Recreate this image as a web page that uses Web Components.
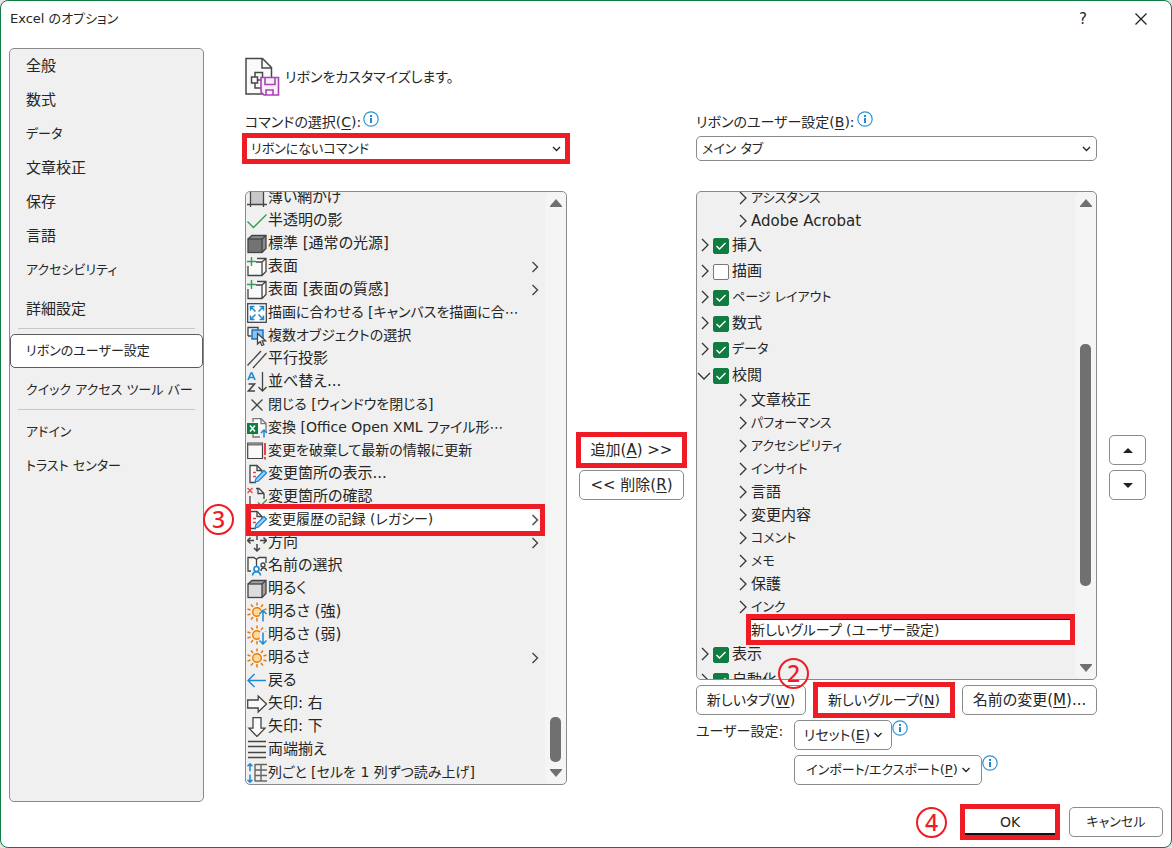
<!DOCTYPE html>
<html lang="ja">
<head>
<meta charset="utf-8">
<title>Excel のオプション</title>
<style>
html, body { margin: 0; height: 100%; background: #e4e4e4; }
body {
  font: 15px/22px "DejaVu Sans", "Noto Sans CJK JP", sans-serif;
  font-feature-settings: "palt";
  color: #262626;
  --line: #8a8a8a;
  --panel: #f0f0f0;
  --mark: #ee1c25;
  --green: #107c41;
}
</style>
</head>
<body>
<options-dialog></options-dialog>

<template id="dialog">
<style>
:host {
  display: grid; grid-template: 46px minmax(0, 1fr) 45px / minmax(0, 1fr);
  box-sizing: border-box; height: 100vh; min-height: 640px;
  border: 1px solid var(--green); border-radius: 8px; background: #fff;
  overflow: hidden;
}
.mixed { font-size: 14px; }
.kana { font-size: 13px; }
header { display: flex; align-items: flex-start; justify-content: space-between; padding: 7px 7px 0 9px; }
h1, h2 { margin: 0; font-weight: 400; font-size: 15px; }
h1 { font-size: 13px; }
.tools { display: flex; gap: 12px; }
.tools button { width: 46px; height: 22px; padding: 0; border: 0; background: none; font: inherit; color: inherit; display: grid; place-items: center; }
.body { display: grid; grid-template-columns: 195px minmax(0, 1fr); gap: 41px; padding: 1px 25px 0 8px; min-height: 0; }
nav { border: 1px solid var(--line); border-radius: 5px; background: var(--panel); }
nav hr { border: 0; border-top: 1px solid #c8c8c8; margin: 2px 8px 5px; }
nav .gap { height: 5px; }
main { display: flex; flex-direction: column; min-height: 0; padding: 9px 0 17px; box-sizing: border-box; }
.head { display: flex; align-items: center; gap: 4px; height: 40px; margin-bottom: 13px; }
.cols { flex: 1; min-height: 0; display: grid; grid-template-columns: minmax(0, 322fr) 105px minmax(0, 401fr) 37px; column-gap: 12px; }
.col { display: flex; flex-direction: column; min-height: 0; }
.side { display: flex; flex-direction: column; justify-content: center; gap: 5px; padding-top: 40px; }
.list { position: relative; flex: 1; min-height: 0; margin-top: 30px; display: flex; }
.row { display: flex; justify-content: space-between; margin: 5px 0; }
.spot { position: relative; }
.spot step-mark { position: absolute; left: -38px; top: -27px; }
.list step-mark { position: absolute; left: -42px; top: 313px; }
.custom { display: grid; grid-template-columns: 98px 1fr; row-gap: 5px; }
.custom > div { grid-column: 2; display: flex; align-items: flex-start; }
footer { display: flex; justify-content: flex-end; align-items: flex-start; gap: 12px; padding: 5px 8px 0; }
footer step-mark { margin-right: 4px; }
</style>
<header>
  <h1>Excel のオプション</h1>
  <div class="tools">
    <button aria-label="ヘルプ">?</button>
    <button aria-label="閉じる"><svg width="12" height="12" viewBox="0 0 12 12" fill="none" stroke="#222" stroke-width="1.3"><path d="M.5.5l11 11M11.5.5l-11 11"/></svg></button>
  </div>
</header>
<div class="body">
  <nav>
    <nav-item>全般</nav-item><nav-item>数式</nav-item><nav-item class="kana">データ</nav-item><nav-item>文章校正</nav-item>
    <nav-item>保存</nav-item><nav-item>言語</nav-item><nav-item class="kana">アクセシビリティ</nav-item>
    <div class="gap"></div>
    <nav-item>詳細設定</nav-item><hr>
    <nav-item current class="kana">リボンのユーザー設定</nav-item>
    <div class="gap"></div>
    <nav-item class="kana">クイック アクセス ツール バー</nav-item><hr>
    <nav-item class="kana">アドイン</nav-item><nav-item class="kana">トラスト センター</nav-item>
  </nav>
  <main>
    <div class="head">
      <svg width="36" height="40" viewBox="0 0 36 40" fill="none">
        <path d="M1 1.500h16.500l9 9v26.500H1z" fill="#fafafa" stroke="#484848" stroke-width="1.500"/>
        <path d="M17 1.500V11h9.500" stroke="#484848" stroke-width="1.500"/>
        <path d="M10 20v-4.500h7.500v5M10 26v5h6M12.500 20H6.500v6h6zM12.500 23H16" stroke="#484848" stroke-width="1.500"/>
        <path d="M16 20.500h17.500v17.500H19l-3-3z" fill="#fbeffb" stroke="#a845b2" stroke-width="1.600"/>
        <path d="M20 21v6.500h10V21M21 38v-5h7v5" stroke="#a845b2" stroke-width="1.600"/>
      </svg>
      <h2 class="mixed">リボンをカスタマイズします。</h2>
    </div>
    <div class="cols">
      <div class="col">
        <pick-field class="mixed" value="リボンにないコマンド" marked>コマンドの選択(<u>C</u>):</pick-field>
        <div class="list">
          <scroll-list before="504" thumb="45" after="0" label="コマンド">
            <command-row icon="shade">薄い網かけ</command-row>
            <command-row icon="check">半透明の影</command-row>
            <command-row icon="cubeDark">標準 [通常の光源]</command-row>
            <command-row icon="cubePlus" more>表面</command-row>
            <command-row icon="cubePlus" more>表面 [表面の質感]</command-row>
            <command-row icon="fit" class="mixed">描画に合わせる [キャンバスを描画に合⋯</command-row>
            <command-row icon="multi" class="mixed">複数オブジェクトの選択</command-row>
            <command-row icon="parallel">平行投影</command-row>
            <command-row icon="sort">並べ替え...</command-row>
            <command-row icon="close" class="mixed">閉じる [ウィンドウを閉じる]</command-row>
            <command-row icon="convert" class="mixed">変換 [Office Open XML ファイル形⋯</command-row>
            <command-row icon="revert" class="mixed">変更を破棄して最新の情報に更新</command-row>
            <command-row icon="track">変更箇所の表示...</command-row>
            <command-row icon="review">変更箇所の確認</command-row>
            <command-row icon="track" more marked class="mixed">変更履歴の記録 (レガシー)</command-row>
            <command-row icon="dirs" more>方向</command-row>
            <command-row icon="names">名前の選択</command-row>
            <command-row icon="cubeLight">明るく</command-row>
            <command-row icon="sunUp">明るさ (強)</command-row>
            <command-row icon="sunDown">明るさ (弱)</command-row>
            <command-row icon="sun" more>明るさ</command-row>
            <command-row icon="back">戻る</command-row>
            <command-row icon="right">矢印: 右</command-row>
            <command-row icon="down">矢印: 下</command-row>
            <command-row icon="justify">両端揃え</command-row>
            <command-row icon="columns" class="mixed">列ごと [セルを 1 列ずつ読み上げ]</command-row>
          </scroll-list>
          <step-mark>3</step-mark>
        </div>
      </div>
      <div class="side">
        <push-button marked>追加(<u>A</u>) &gt;&gt;</push-button>
        <push-button>&lt;&lt; 削除(<u>R</u>)</push-button>
      </div>
      <div class="col">
        <pick-field class="mixed" value="メイン タブ">リボンのユーザー設定(<u>B</u>):</pick-field>
        <div class="list">
          <scroll-list before="130" thumb="242" after="71" label="リボンのタブ">
            <tree-row class="kana">アシスタンス</tree-row>
            <tree-row>Adobe Acrobat</tree-row>
            <tree-row tab checked>挿入</tree-row>
            <tree-row tab>描画</tree-row>
            <tree-row tab checked class="kana">ページ レイアウト</tree-row>
            <tree-row tab checked>数式</tree-row>
            <tree-row tab checked class="kana">データ</tree-row>
            <tree-row tab checked open>校閲</tree-row>
            <tree-row>文章校正</tree-row>
            <tree-row class="kana">パフォーマンス</tree-row>
            <tree-row class="kana">アクセシビリティ</tree-row>
            <tree-row class="kana">インサイト</tree-row>
            <tree-row>言語</tree-row>
            <tree-row>変更内容</tree-row>
            <tree-row class="kana">コメント</tree-row>
            <tree-row class="kana">メモ</tree-row>
            <tree-row>保護</tree-row>
            <tree-row class="kana">インク</tree-row>
            <tree-row marked class="mixed">新しいグループ (ユーザー設定)</tree-row>
            <tree-row tab checked>表示</tree-row>
            <tree-row tab checked>自動化</tree-row>
          </scroll-list>
        </div>
        <div class="row">
          <push-button class="mixed" style="width:110px">新しいタブ(<u>W</u>)</push-button>
          <div class="spot"><push-button class="mixed" marked style="width:136px">新しいグループ(<u>N</u>)</push-button><step-mark>2</step-mark></div>
          <push-button style="width:135px">名前の変更(<u>M</u>)...</push-button>
        </div>
        <div class="custom">
          <span class="mixed">ユーザー設定:</span>
          <div><push-button menu class="mixed" style="width:98px">リセット(<u>E</u>)</push-button><info-icon></info-icon></div>
          <div><push-button menu class="kana" style="width:188px">インポート/エクスポート(<u>P</u>)</push-button><info-icon></info-icon></div>
        </div>
      </div>
      <div class="side">
        <push-button label="上へ"><svg width="10" height="5" viewBox="0 0 10 5"><path d="M0 5l5-5 5 5z" fill="#222"/></svg></push-button>
        <push-button label="下へ"><svg width="10" height="5" viewBox="0 0 10 5"><path d="M0 0l5 5 5-5z" fill="#222"/></svg></push-button>
      </div>
    </div>
  </main>
</div>
<footer>
  <step-mark>4</step-mark>
  <push-button marked primary class="mixed" style="width:94px">OK</push-button>
  <push-button class="kana" style="width:94px">キャンセル</push-button>
</footer>
</template>

<script>
const define = (name, markup, ready) => customElements.define(name, class extends HTMLElement {
  connectedCallback() {
    if (this.shadowRoot) return;
    const root = this.attachShadow({ mode: 'open' });
    root.innerHTML = typeof markup === 'function' ? markup(this) : markup;
    if (ready) ready(this, root);
  }
});

const ink = '#444', blue = '#1e88d2', green = '#2f9e4f', red = '#e8414b';
const cube = (fill, top) => `<path d="M1 5l4-3.500h14v13l-4 4" fill="${top}" stroke="${ink}"/><rect x="1" y="5" width="14" height="13.500" fill="${fill}" stroke="${ink}"/><path d="M15 5l4-3.500" stroke="${ink}"/>`;
const sun = `<circle cx="10" cy="10" r="4.300" fill="#fbdc96" stroke="#e8780c" stroke-width="1.400"/><path d="M10 .5v3M10 16v3.500M.5 7l3 1M.5 13l3-1M16.500 8l3-1M16.500 12l3 1M4 2.500l2 2.500M14 15l2 2.500M4 17.500L6 15M14 5l2-2.500" stroke="#e8780c" stroke-width="1.500"/>`;
const page = `<path d="M9 18.500H3V1.500h7l5 5v3" fill="#fafafa" stroke="${ink}"/><path d="M10 1.500v5h5" stroke="${ink}"/>`;
const icons = {
  shade: `<rect x="3" y="1" width="14" height="15" fill="#c8c8c8"/><path d="M3.500 0v19M16.500 0v19M0 16.500h20" stroke="${ink}"/>`,
  check: `<path d="M.5 10.500l6 6L19.500 3.500" stroke="${green}" stroke-width="1.400"/>`,
  cubeDark: cube('#737373', '#8c8c8c'),
  cubeLight: cube('#dcdcdc', '#a2a2a2'),
  cubePlus: `<path d="M10 1.500h9v13l-4 4H1V9M9 5h6v13.500M15 5l4-3.500" fill="#fafafa" stroke="${ink}"/><path d="M4.500 0v9M0 4.500h9" stroke="${green}" stroke-width="1.400"/>`,
  fit: `<rect x=".7" y=".7" width="18.600" height="18.600" fill="#fff" stroke="${ink}" stroke-width="1.300"/><path d="M3.500 7.500v-4h4M3.500 3.500l5 5M12.500 3.500h4v4M16.500 3.500l-5 5M3.500 12.500v4h4M3.500 16.500l5-5M16.500 12.500v4h-4M16.500 16.500l-5-5" stroke="${blue}" stroke-width="1.500"/>`,
  multi: `<path d="M1 10V1.500h10V4M1 10h3" fill="#fff" stroke="${ink}"/><rect x="5" y="4" width="11" height="9" fill="#8cc4ee" stroke="#0f6cbd" stroke-width="1.400"/><path d="M10.500 7.500v10.500l2.700-2.500 1.600 4 2-.8-1.700-3.900h3.400z" fill="#fff" stroke="${ink}"/>`,
  parallel: `<path d="M.5 16.500L14 2M6 19L19.500 4" stroke="${ink}" stroke-width="1.300"/>`,
  sort: `<path d="M1 8l3-7h1l3 7M2.200 5.500h4.600" stroke="${blue}" stroke-width="1.600"/><path d="M1.500 12h6l-6 7h6.500" stroke="${ink}" stroke-width="1.600"/><path d="M15.500 0v19M11.500 15l4 4 4-4" stroke="${ink}" stroke-width="1.300"/>`,
  close: `<path d="M4.500 4.500l11 11M15.500 4.500l-11 11" stroke="${ink}" stroke-width="1.300"/>`,
  convert: `<path d="M6 4V.7h8l5 4.800V14M6 16v3h7" fill="#fafafa" stroke="#777"/><path d="M14 .7v5h5" stroke="#777"/><rect y="5" width="11" height="11" fill="#107c41"/><path d="M3 7.500l5 6M8 7.500l-5 6" stroke="#fff" stroke-width="1.500"/><path d="M17 19.500V12M14 15l3-3 3 3" stroke="${blue}" stroke-width="1.500"/>`,
  revert: `<path d="M15.500 2v15.500H.7V2z" fill="#fafafa" stroke="${ink}" stroke-width="1.200"/><path d="M1 3.500h14.500" stroke="#777" stroke-width="2"/><path d="M18 2v12M18 16v2.500" stroke="${red}" stroke-width="2"/>`,
  track: page + `<path d="M6 8.500h3M6 12.500h3" stroke="${red}" stroke-width="1.600"/><path d="M8 18l1-3.500 8-8 2.500 2.500-8 8z" fill="#9fd0f3" stroke="${blue}" stroke-width="1.300"/>`,
  review: `<path d="M3 9v9.500h7M9 1.500h3l5 5V12" fill="#fafafa" stroke="${ink}"/><path d="M11 1.500v5h6" stroke="${ink}"/><path d="M.5 1l5 5M5.500 1l-5 5" stroke="${red}" stroke-width="1.300"/><path d="M11 15.500l3 3 6-6" stroke="${green}" stroke-width="1.500"/>`,
  dirs: `<path d="M.5 7.500H7M3.500 4.500l-3 3 3 3M19.500 7.500H13M16.500 4.500l3 3-3 3M10 11v7M7 15l3 3 3-3M10 3v4" stroke="${ink}" stroke-width="1.500"/>`,
  names: `<path d="M4 15H1V1.500h6l2.500 2L12 1.500h7V7M9.500 3.500V10" fill="#fafafa" stroke="${ink}"/><circle cx="9.500" cy="13" r="2.500" fill="#fff" stroke="${blue}" stroke-width="1.600"/><path d="M5.500 19.500c.5-5 7.500-5 8 0" stroke="${blue}" stroke-width="1.600"/><circle cx="16" cy="9" r="2" stroke="${ink}"/><path d="M14 15c0-4 5-4 5.500 0" stroke="${ink}"/>`,
  sun,
  sunUp: sun + `<path d="M13 9h7v11h-7z" fill="#f0f0f0"/><path d="M16 19.500V8.500M12.500 12L16 8.500l3.500 3.500" stroke="${blue}" stroke-width="1.500"/>`,
  sunDown: sun + `<path d="M13 7h7v13h-7z" fill="#f0f0f0"/><path d="M16 7.500v11.500M12.500 15.500L16 19l3.500-3.500" stroke="${blue}" stroke-width="1.500"/>`,
  back: `<path d="M19 9.500H1M7.500 3l-6.500 6.500L7.500 16" stroke="${blue}" stroke-width="1.500"/>`,
  right: `<path d="M.7 6h10.500V2l8.300 8-8.300 8v-4H.7z" fill="#fafafa" stroke="${ink}" stroke-width="1.300"/>`,
  down: `<path d="M6 .7v10.500H2l8 8.300 8-8.300h-4V.7z" fill="#fafafa" stroke="${ink}" stroke-width="1.300"/>`,
  justify: `<path d="M1 1.500h18M1 6.500h18M1 12.500h18M1 17.500h18" stroke="${ink}" stroke-width="1.300"/>`,
  columns: `<path d="M3 .8v7.500M.5 3.300L3 .8l2.500 2.500M3 11.500v7.700M.5 16.700L3 19.200l2.500-2.500" stroke="${blue}" stroke-width="1.500"/><path d="M8 1.500h12M8 7h12M8 12.500h12M8 18h12M8 1v17.500M14 1v17.500" stroke="#666" stroke-width="1.400"/>`
};

define('nav-item', el => `<style>
:host { display: block; }
a { display: block; height: 34px; padding: 0 16px; box-sizing: border-box; line-height: 34px; color: inherit; text-decoration: none; white-space: nowrap; }
a[aria-current] { background: #fff; border: 1px solid #5c5c5c; border-radius: 5px; line-height: 32px; padding: 0 15px; }
</style><a href="#"${el.hasAttribute('current') ? ' aria-current="page"' : ''}><slot></slot></a>`);

define('info-icon', `<style>:host { display: block; width: 16px; height: 16px; }svg { display: block; }</style>
<svg width="16" height="16" viewBox="0 0 16 16"><circle cx="8" cy="8" r="7.200" fill="#fff" stroke="#2a93d5" stroke-width="1.200"/><path d="M7 4h2v2H7zM7 7h2v5H7z" fill="#2a86c8"/></svg>`);

define('step-mark', `<style>
:host { display: grid; place-items: center; box-sizing: border-box; width: 31px; height: 31px; border: 2px solid var(--mark); border-radius: 50%; color: var(--mark); font: 500 23px/27px "Noto Sans", sans-serif; z-index: 3; }
</style><span><slot></slot></span>`);

define('push-button', el => `<style>
:host { display: block; }
button { display: flex; align-items: center; justify-content: center; gap: 4px; width: 100%; height: 30px; padding: 0; background: #fff; border: 1px solid var(--line); border-radius: 5px; font: inherit; font-feature-settings: inherit; color: inherit; white-space: nowrap; }
:host([marked]) button { border-radius: 0; outline: 5px solid var(--mark); outline-offset: -2px; }
:host([primary]) button { border-bottom: 4px solid #111; padding-top: 2px; }
::slotted(u) { text-underline-offset: 2px; }
::slotted(svg) { display: block; }
</style><button${el.hasAttribute('label') ? ` aria-label="${el.getAttribute('label')}"` : ''}><span><slot></slot></span>${el.hasAttribute('menu') ? '<svg width="8" height="6" viewBox="0 0 8 6" fill="none" stroke="#222" stroke-width="1.300"><path d="M.5 1L4 4.500 7.500 1"/></svg>' : ''}</button>`);

define('pick-field', el => `<style>
:host { display: block; }
.top { display: flex; height: 26px; }
label { line-height: 24px; }
info-icon { margin: 1px 0 0 2px; }
::slotted(u) { text-underline-offset: 2px; }
.box { display: grid; }
.box > * { grid-area: 1 / 1; }
select { appearance: none; width: 100%; height: 25px; padding: 0 24px 0 5px; background: #fff; border: 1px solid var(--line); border-radius: 5px; font: inherit; font-size: 13px; line-height: 22px; font-feature-settings: inherit; color: inherit; }
:host([marked]) select { border-radius: 0; outline: 5px solid var(--mark); outline-offset: -2px; }
svg { place-self: center end; margin-right: 6px; pointer-events: none; }
</style><div class="top"><label for="s"><slot></slot></label><info-icon></info-icon></div>
<div class="box"><select id="s"><option>${el.getAttribute('value')}</option></select>
<svg width="9" height="6" viewBox="0 0 9 6" fill="none" stroke="#222" stroke-width="1.300"><path d="M1 1l3.500 3.500L8 1"/></svg></div>`);

define('scroll-list', el => `<style>
:host { flex: 1; min-width: 0; display: grid; grid-template-columns: minmax(0, 1fr) 21px; grid-template-rows: minmax(0, 1fr); border: 1px solid var(--line); border-radius: 5px; background: var(--panel); overflow: hidden; }
.view { overflow: auto; scrollbar-width: none; min-height: 0; }
.rail { display: flex; flex-direction: column; align-items: center; background: #f5f5f5; border-radius: 5px; min-height: 0; }
.rail svg { flex: none; margin: 7px 0; }
.thumb { width: 11px; border-radius: 5px; background: #707070; flex: ${el.getAttribute('thumb')} 0 0px; }
.before { flex: ${el.getAttribute('before')} 0 0px; }
.after { flex: ${el.getAttribute('after')} 0 0px; }
</style><div class="view" tabindex="0" role="group" aria-label="${el.getAttribute('label')}"><slot></slot></div>
<div class="rail"><svg width="12" height="8" viewBox="0 0 12 8"><path d="M6 0l6 7v1H0V7z" fill="#707070"/></svg><div class="before"></div><div class="thumb"></div><div class="after"></div><svg width="12" height="8" viewBox="0 0 12 8"><path d="M6 8l6-7V0H0v1z" fill="#707070"/></svg></div>`);

define('command-row', el => `<style>
:host { position: relative; display: flex; align-items: center; height: 23px; padding: 0 6px 0 1px; white-space: nowrap; }
:host([marked]) { background: #fff; z-index: 1; }
:host([marked])::after { content: ""; position: absolute; inset: -4px 0 -5px; border: 5px solid var(--mark); }
.icon { flex: none; margin-right: 1px; }
span { flex: 1; min-width: 0; overflow: hidden; line-height: 23px; }
</style><svg class="icon" width="20" height="20" viewBox="0 0 20 20" fill="none" stroke-width="1.300">${icons[el.getAttribute('icon')]}</svg><span><slot></slot></span>
${el.hasAttribute('more') ? `<svg width="8" height="12" viewBox="0 0 8 12" fill="none" stroke="${ink}" stroke-width="1.400"><path d="M1.500 1l5 5-5 5"/></svg>` : ''}`);

define('tree-row', el => {
  const tab = el.hasAttribute('tab'), open = el.hasAttribute('open'), on = el.hasAttribute('checked');
  const arrow = el.hasAttribute('marked') ? '' : `<path d="${open ? 'M1 6l6 6 6-6' : 'M5 2l6 6-6 6'}"/>`;
  return `<style>
:host { position: relative; display: flex; align-items: center; height: 23px; padding-left: 38px; white-space: nowrap; }
:host([tab]) { height: 26px; padding-left: 0; }
.arrow { flex: none; }
label { display: flex; align-items: center; gap: 3px; }
.tick { display: grid; }
.tick > * { grid-area: 1 / 1; }
input { appearance: none; box-sizing: border-box; width: 16px; height: 16px; margin: 1px 0 0; border: 1px solid #777; border-radius: 2px; background: #fff; }
input:checked { background: var(--green); border-color: var(--green); }
.tick svg { pointer-events: none; margin-top: 1px; }
:host([marked]) { z-index: 1; }
:host([marked]) .text { flex: 1; height: 23px; box-sizing: border-box; background: #fff; border-top: 2px solid #111; line-height: 20px; }
:host([marked])::after { content: ""; position: absolute; inset: -4px 0 -4px 49px; border: 5px solid var(--mark); }
</style><svg class="arrow" width="16" height="16" viewBox="0 0 16 16" fill="none" stroke="#333" stroke-width="1.300">${arrow}</svg>
${tab ? `<label><span class="tick"><input type="checkbox"${on ? ' checked' : ''}>${on ? '<svg width="16" height="16" viewBox="0 0 16 16" fill="none" stroke="#fff" stroke-width="1.400"><path d="M3.500 8l3 3 6-6"/></svg>' : ''}</span><span><slot></slot></span></label>` : '<span class="text"><slot></slot></span>'}`;
});

define('options-dialog', document.getElementById('dialog').innerHTML, (el, root) => {
  for (const list of root.querySelectorAll('scroll-list')) list.shadowRoot.querySelector('.view').scrollTop = 6;
});
</script>
</body>
</html>
